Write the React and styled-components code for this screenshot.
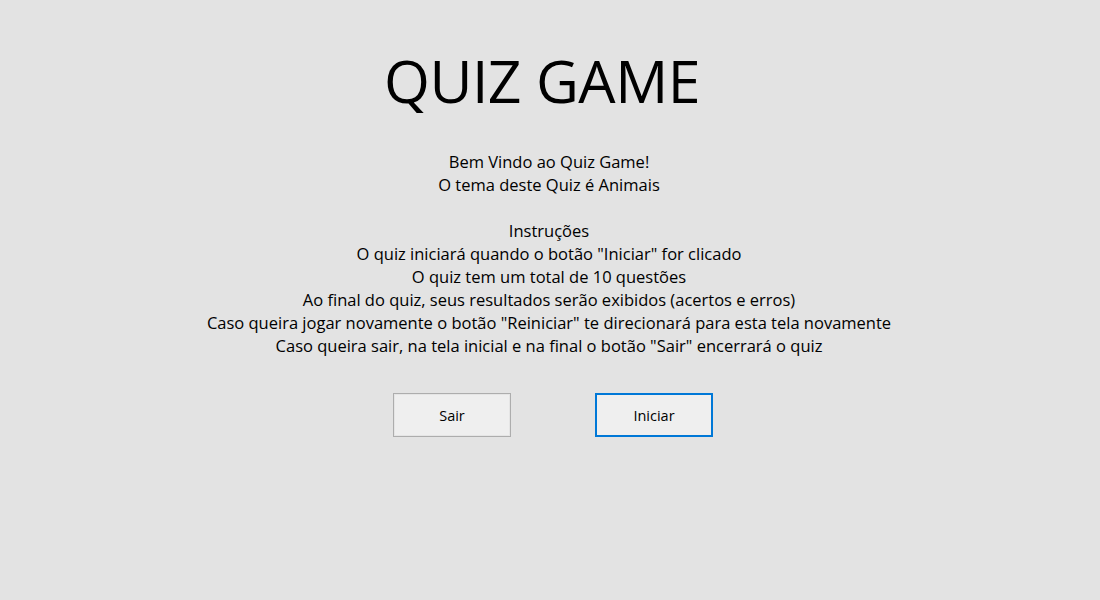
import React from 'react';
import styled, { createGlobalStyle } from 'styled-components';

const lines = [
  'Bem Vindo ao Quiz Game!',
  'O tema deste Quiz é Animais',
  '',
  'Instruções',
  'O quiz iniciará quando o botão "Iniciar" for clicado',
  'O quiz tem um total de 10 questões',
  'Ao final do quiz, seus resultados serão exibidos (acertos e erros)',
  'Caso queira jogar novamente o botão "Reiniciar" te direcionará para esta tela novamente',
  'Caso queira sair, na tela inicial e na final o botão "Sair" encerrará o quiz',
];

const GlobalStyle = createGlobalStyle`
  html, body {
    margin: 0;
    background: #e3e3e3;
  }
  body {
    font-family: "Open Sans", "Noto Sans", sans-serif;
    color: #000;
  }
`;

const App = () => (
  <>
    <GlobalStyle />
    <Window>
      <Title>QUIZ GAME</Title>
      <Intro>
        {lines.map((line, i) => (
          <Line key={i}>{line || '\u00a0'}</Line>
        ))}
      </Intro>
      <Actions>
        <FormButton>Sair</FormButton>
        <FormButton focused>Iniciar</FormButton>
      </Actions>
    </Window>
  </>
);

const Window = styled.div`
  width: 1100px;
  height: 600px;
  display: flex;
  flex-direction: column;
  align-items: center;
  box-sizing: border-box;
  padding-top: 40px;
`;

const Title = styled.h1`
  margin: 0 16px 0 0;
  font-size: 59px;
  font-weight: 400;
  line-height: 80px;
  letter-spacing: -0.5px;
`;

const Intro = styled.div`
  margin: 30px 0 0 -2px;
  text-align: center;
  font-size: 16.5px;
  line-height: 23px;
`;

const Line = styled.div`
  white-space: nowrap;
`;

const Actions = styled.div`
  display: flex;
  gap: 84px;
  margin: 36px 0 0 6px;
`;

const FormButton = styled.button`
  width: 118px;
  height: 44px;
  box-sizing: border-box;
  font-family: inherit;
  font-size: 14.5px;
  color: #000;
  background: #efefef;
  border: ${({ focused }) => (focused ? '2px solid #0078d7' : '1px solid #adadad')};
  box-shadow: ${({ focused }) => (focused ? 'none' : 'inset 0 0 0 1px #e5e5e5')};
  padding: 0;
`;

export default App;
